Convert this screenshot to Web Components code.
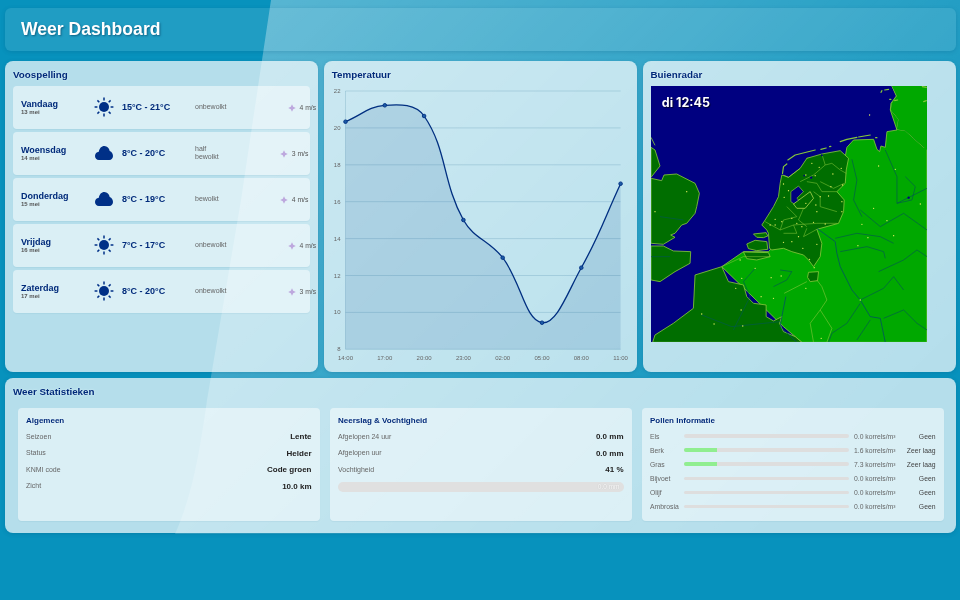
<!DOCTYPE html>
<html lang="nl"><head><meta charset="utf-8"><title>Weer Dashboard</title>
<style>
html,body{margin:0;padding:0;height:100%}
body{background:#0792bd;font-family:"Liberation Sans",Arial,sans-serif;overflow:hidden}
</style></head><body>
<weer-app>
  <weer-glare></weer-glare>
  <weer-header>Weer Dashboard</weer-header>
  <weer-top>
    <weer-card heading="Voospelling">
      <forecast-row day="Vandaag" date="13 mei" icon="sun" temp="15°C - 21°C" desc="onbewolkt" wind="4 m/s"></forecast-row>
      <forecast-row day="Woensdag" date="14 mei" icon="cloud" temp="8°C - 20°C" desc="half bewolkt" wind="3 m/s"></forecast-row>
      <forecast-row day="Donderdag" date="15 mei" icon="cloud" temp="8°C - 19°C" desc="bewolkt" wind="4 m/s"></forecast-row>
      <forecast-row day="Vrijdag" date="16 mei" icon="sun" temp="7°C - 17°C" desc="onbewolkt" wind="4 m/s"></forecast-row>
      <forecast-row day="Zaterdag" date="17 mei" icon="sun" temp="8°C - 20°C" desc="onbewolkt" wind="3 m/s"></forecast-row>
    </weer-card>
    <weer-card heading="Temperatuur"><temp-chart></temp-chart></weer-card>
    <weer-card heading="Buienradar"><radar-map></radar-map></weer-card>
  </weer-top>
  <weer-card heading="Weer Statistieken" wide>
    <stat-grid>
      <stat-box heading="Algemeen">
        <stat-row label="Seizoen" value="Lente"></stat-row>
        <stat-row label="Status" value="Helder"></stat-row>
        <stat-row label="KNMI code" value="Code groen"></stat-row>
        <stat-row label="Zicht" value="10.0 km"></stat-row>
      </stat-box>
      <stat-box heading="Neerslag &amp; Vochtigheid">
        <stat-row label="Afgelopen 24 uur" value="0.0 mm"></stat-row>
        <stat-row label="Afgelopen uur" value="0.0 mm"></stat-row>
        <stat-row label="Vochtigheid" value="41 %"></stat-row>
        <rain-bar>0.0 mm</rain-bar>
      </stat-box>
      <stat-box heading="Pollen Informatie">
        <pollen-row name="Els" amount="0.0 korrels/m³" level="Geen" pct="0"></pollen-row>
        <pollen-row name="Berk" amount="1.6 korrels/m³" level="Zeer laag" pct="20"></pollen-row>
        <pollen-row name="Gras" amount="7.3 korrels/m³" level="Zeer laag" pct="20"></pollen-row>
        <pollen-row name="Bijvoet" amount="0.0 korrels/m³" level="Geen" pct="0"></pollen-row>
        <pollen-row name="Olijf" amount="0.0 korrels/m³" level="Geen" pct="0"></pollen-row>
        <pollen-row name="Ambrosia" amount="0.0 korrels/m³" level="Geen" pct="0"></pollen-row>
      </stat-box>
    </stat-grid>
  </weer-card>
</weer-app>
<script>
function el(name, render){
  customElements.define(name, class extends HTMLElement{
    connectedCallback(){
      if(this.shadowRoot) return;
      const a=n=>this.getAttribute(n)||'';
      this.attachShadow({mode:'open'}).innerHTML=render(a,this);
    }
  });
}
el('weer-app',()=>`<style>:host{display:flex;flex-direction:column;position:relative;isolation:isolate;width:960px;height:600px;box-sizing:border-box;padding:8px 4px 0 5px;filter:blur(.3px)}</style><slot></slot>`);
el('weer-header',()=>`<style>:host{display:flex;align-items:center;height:43px;box-sizing:border-box;padding:0 16px 1px;margin-bottom:10px;flex:none;
  background:rgba(255,255,255,.1);border-radius:6px;box-shadow:0 1px 4px rgba(0,60,100,.18);color:#fff;font:bold 17.600px "Liberation Sans",sans-serif;text-shadow:1px 1px 2px rgba(0,40,70,.5)}</style><slot></slot>`);
el('weer-top',()=>`<style>:host{display:grid;grid-template-columns:repeat(3,1fr);column-gap:5.3px;height:311px;margin-bottom:6px;flex:none}</style><slot></slot>`);
el('weer-card',a=>`<style>:host{display:flex;flex-direction:column;box-sizing:border-box;padding:7px 8px 8px;border-radius:8px;min-width:0;
  background:rgba(255,255,255,.7);box-shadow:0 1px 4px rgba(0,60,100,.2)}
  :host([wide]){height:155px;flex:none}
  h2{margin:0 0 5px;font:bold 9.800px/13px "Liberation Sans",sans-serif;color:#002a7a;text-shadow:0 0 2px rgba(255,255,255,.7)}
  div{display:flex;flex-direction:column;gap:3px;flex:1;min-height:0}</style><h2>${a('heading')}</h2><div><slot></slot></div>`);
const SUN=`<svg width="20" height="20" viewBox="0 0 20 20" fill="#003087" stroke="#003087"><circle cx="10" cy="10" r="5" stroke="none"/><path stroke-width="1.500" d="M10 .6V3.400M10 16.600V19.400M.6 10H3.400M16.600 10H19.400M3.400 3.400L5.300 5.300M14.700 14.700L16.600 16.600M3.400 16.600L5.300 14.700M14.700 5.300L16.600 3.400"/></svg>`;
const CLOUD=`<svg width="20" height="20" viewBox="0 0 20 20" fill="#003087"><path d="M5 17C2.500 17 1 15.200 1 13C1 10.800 2.600 9 4.800 8.800C5.400 5.400 7.400 3 10.400 3C13.200 3 15.200 5.200 15.700 7.900C17.800 8.600 19 10.600 19 13C19 15.200 17.500 17 15.300 17Z"/></svg>`;
const STAR=`<svg width="8" height="8" viewBox="0 0 8 8" fill="#bda8de"><path d="M4 .2L5.200 2.800L7.800 4L5.200 5.200L4 7.800L2.800 5.200L.2 4L2.800 2.800Z"/></svg>`;
el('forecast-row',a=>`<style>:host{display:flex;align-items:center;height:43px;flex:none;box-sizing:border-box;padding-left:8px;border-radius:4px;background:rgba(255,255,255,.5);box-shadow:0 1px 1px rgba(0,80,120,.06);font-family:"Liberation Sans",sans-serif}
  .d{flex:0 0 73px;color:#002a7a}.d b{display:block;font:bold 9px/10.500px "Liberation Sans",sans-serif}.d small{display:block;font:bold 6px/7px "Liberation Sans",sans-serif;color:#555}
  .i{flex:0 0 20px;height:20px;margin:-1px 8px 0 0}.t{flex:0 0 73px;font:bold 9px/11px "Liberation Sans",sans-serif;color:#002a7a;white-space:nowrap;margin-top:-1px}
  .x{flex:none;width:min-content;font:7px/8px "Liberation Sans",sans-serif;color:#666;margin-top:-1px}
  .w{flex:none;display:flex;align-items:center;gap:3.500px;margin-left:61.500px;font:6.800px/8px "Liberation Sans",sans-serif;color:#555;white-space:nowrap}svg{display:block}</style>
  <div class="d"><b>${a('day')}</b><small>${a('date')}</small></div><div class="i">${a('icon')=='sun'?SUN:CLOUD}</div><div class="t">${a('temp')}</div><div class="x">${a('desc')}</div><div class="w">${STAR}<span>${a('wind')}</span></div>`);
el('temp-chart',()=>{
  const L=331.8,xs=[...Array(8)].map((_,i)=>345.3+i*39.3-L),yv=[121.7,105.3,116,220,257.7,322.7,267.7,183.7].map(v=>v-86);
  const top=5,st=36.9,p=xs.map((x,i)=>[x,yv[i]]);
  const c=p.map((q,i)=>{const pr=p[i-1]||q,nx=p[i+1]||q,d1=Math.hypot(q[0]-pr[0],q[1]-pr[1]),d2=Math.hypot(nx[0]-q[0],nx[1]-q[1]),s=d1+d2||1,fa=.4*d1/s,fb=.4*d2/s;
    return{a:[q[0]-fa*(nx[0]-pr[0]),q[1]-fa*(nx[1]-pr[1])],b:[q[0]+fb*(nx[0]-pr[0]),q[1]+fb*(nx[1]-pr[1])]}});
  let d=`M${p[0][0]} ${p[0][1]}`;for(let i=1;i<8;i++)d+=`C${c[i-1].b[0]} ${c[i-1].b[1]} ${c[i].a[0]} ${c[i].a[1]} ${p[i][0]} ${p[i][1]}`;
  const bot=top+7*st,x0=xs[0],x1=xs[7];
  let g='';[22,20,18,16,14,12,10,8].forEach((v,i)=>{const y=top+i*st;g+=`<line x1="${x0}" x2="${x1}" y1="${y}" y2="${y}" stroke="#0a5a80" stroke-opacity=".18" stroke-width=".9"/><text x="${x0-5}" y="${y+2}" text-anchor="end">${v}</text>`});
  ['14:00','17:00','20:00','23:00','02:00','05:00','08:00','11:00'].forEach((t,i)=>g+=`<text x="${xs[i]}" y="${bot+11}" text-anchor="middle">${t}</text>`);
  const pts=p.map(q=>`<circle cx="${q[0]}" cy="${q[1]}" r="1.800" fill="#1c5aa6" stroke="#002f80" stroke-width=".9"/>`).join('');
  return `<style>:host{display:block}svg{display:block;overflow:visible}text{font:6px "Liberation Sans",sans-serif;fill:#666}</style>
  <svg width="298" height="275" viewBox="0 0 298 275"><line x1="${x0}" x2="${x0}" y1="${top}" y2="${bot}" stroke="#0a5a80" stroke-opacity=".2" stroke-width=".8"/>${g}<path d="${d}L${x1} ${bot}L${x0} ${bot}Z" fill="#00448a" fill-opacity=".13"/><path d="${d}" fill="none" stroke="#002f80" stroke-width="1.300"/>${pts}</svg>`;
});
const Y='#86c83a',R='#00584e',RB='#004a6a';
const dots=[[515,310],[537,322],[578,342],[603,325],[525,347],[497,345],[430,372],[445,392],[432,412],[572,380],[607,375],[540,410],[565,408],[605,425],[527,435],[497,430],[405,478],[390,495],[405,495],[425,485],[455,475],[470,490],[530,455],[520,487],[555,492],[485,500],[605,455],[430,547],[455,545],[475,530],[530,553],[488,565],[508,598],[522,623],[497,685],[300,600],[345,625],[305,655],[287,685],[393,653],[423,648],[363,710],[400,715],[303,750],[185,762],[222,792],[308,798],[543,835],[660,720],[653,557],[683,533],[760,527],[740,482],[665,493],[700,445],[715,318],[765,328],[840,432],[140,395],[45,455],[688,165]];
el('radar-map',()=>`<style>:host{display:block;position:relative;width:276px;height:256px}svg{display:block}
  .t{position:absolute;left:11.300px;top:8.500px;color:#fff;font:bold 12.500px/16px Inter,"Liberation Sans",sans-serif;text-shadow:1px 1px 1px rgba(0,0,0,.7)}</style>
<svg width="276" height="256.300" viewBox="33 78 827 769" preserveAspectRatio="none">
<rect x="33" y="78" width="827" height="769" fill="#000080"/>
<g fill="#00a800" stroke="${Y}" stroke-width="2.500" stroke-linejoin="round">
<path d="M755 78L770 108L755 130L752 150L775 178L770 208L795 212L820 235L850 262L860 262V847H485L430 800L245 620L310 575L385 575L400 560L480 500L500 295L615 290L620 262L640 240L700 238L710 268L718 275L722 258L735 262L740 215L770 210L750 150L752 130L768 108Z"/>
<path d="M755 78H860V270L850 262L820 235L795 212L770 208L775 178L752 150L755 130L770 108Z" stroke="none"/>
</g>
<g fill="#006e00" stroke="${Y}" stroke-width="2.500" stroke-linejoin="round">
<path d="M245 620L165 645L160 745L100 790L45 825L38 847H485L465 830L430 815L418 790L425 770L400 783L378 770L378 735L340 730L320 710L310 675L265 665Z"/>
<path d="M425 345L445 352L480 325L500 295L545 282L600 272L625 295L618 330L615 370L590 395L612 420L610 455L595 490L530 508L545 550L540 590L520 620L505 600L490 585L455 575L430 565L395 570L388 565L385 520L380 510L365 495L375 480L400 440L415 410L420 370Z"/>
<path d="M340 522L378 518L383 528L370 533L350 532Z"/>
<path d="M320 552L345 541L380 545L383 568L350 572L325 566Z"/>
<path d="M310 576L385 578L390 590L350 600L320 596Z"/>
<path d="M505 637L535 635L532 662L510 665L502 652Z"/>
<path d="M33 262L45 270L60 318L33 352Z"/>
<path d="M33 355L65 362L72 345L110 342L165 370L178 400L170 440L165 460L140 490L125 495L105 520L92 525L105 532L70 553L33 550Z"/>
<path d="M33 558L70 558L100 573L152 575L150 610L105 635L60 665L33 660Z"/>
</g>
<path d="M452 395L475 378L490 395L470 415L480 425L462 432L452 425Z" fill="#000080" stroke="${Y}" stroke-width="2"/>
<path d="M460 432L510 395L520 415L495 445L470 445Z" fill="#006e00" stroke="#a4d24a" stroke-width="2.500"/>
<g fill="none" stroke="${Y}" stroke-width="1.800" opacity=".9">
<path d="M480 365L520 345L555 315L545 282M555 315L575 310L600 330L618 340M540 365L580 385L612 370M500 365L530 370L545 395L590 395M520 395L540 410L540 440L590 455M375 485L420 510L460 495L530 490L590 490M440 440L470 470L430 480L420 510M490 445L475 480L500 500M460 495L470 520L430 520M500 505L490 530L530 508M245 620L310 590L390 590"/>
<path d="M430 345L445 352L480 325" stroke="#a4d24a"/>
</g>
<g fill="none" stroke="#86c83a" stroke-width="3.500" stroke-linecap="round" stroke-linejoin="round">
<path d="M427 340L430 320L440 312"/><path d="M443 300L465 285L525 270"/><path d="M542 268L558 264"/><path d="M568 260L572 259"/><path d="M600 245L620 238L650 232"/><path d="M655 231L690 225"/><path d="M706 233L710 233"/><path d="M722 97L725 92"/><path d="M733 90L745 88"/><path d="M748 118L752 118"/><path d="M763 122L772 120"/><path d="M846 80L858 82"/><path d="M850 125L858 122"/>
</g>
<path d="M33 232L45 256" stroke="${Y}" stroke-width="2.500" fill="none"/>
<g fill="none" stroke="${R}" stroke-width="2">
<path d="M635 298L650 360L640 420L665 470"/><path d="M735 270L770 350L770 430L860 385"/><path d="M795 350L825 380L815 420L770 430"/><path d="M585 535L650 520L720 530L760 550"/><path d="M600 575L680 560L730 575L735 595"/><path d="M715 635L790 600L830 570L860 590"/><path d="M660 450L720 500L790 460L860 510"/><path d="M790 690L760 650L730 685L660 720"/><path d="M345 625L310 665L330 710L300 770"/><path d="M420 630L455 635L440 660L400 680"/><path d="M185 765L275 800L420 785"/><path d="M300 770L280 810"/><path d="M660 730L620 790L575 820L565 847"/><path d="M690 780L650 840"/><path d="M730 775L790 750L830 790L860 810"/><path d="M33 590L90 590M60 470L130 480"/>
</g>
<g fill="none" stroke="${RB}" stroke-width="2.200">
<path d="M530 505L585 545L590 580L600 620L635 690L660 720L690 770L720 775L735 847"/><path d="M437 710L425 770L420 800L470 847"/>
</g>
<g fill="none" stroke="${Y}" stroke-width="1.800"><path d="M530 660L545 680L560 720L540 750L575 805L560 847M540 750L510 790L520 847M432 700L500 665"/></g>
<g fill="#e8f060">${dots.map(d=>`<circle cx="${d[0]}" cy="${d[1]}" r="2"/>`).join('')}</g>
<g fill="#000080"><circle cx="805" cy="413" r="3.500"/><circle cx="513" cy="353" r="3.500"/><circle cx="545" cy="286" r="3"/><circle cx="492" cy="347" r="2.500"/></g>
</svg><div class="t">di 12:45</div>`);
el('stat-grid',()=>`<style>:host{display:grid;grid-template-columns:repeat(3,301.500px);column-gap:10.500px;padding:0 5px;margin-top:5px}</style><slot></slot>`);
el('stat-box',a=>`<style>:host{display:block;height:113px;box-sizing:border-box;padding:8px;border-radius:4px;background:rgba(255,255,255,.5);box-shadow:0 1px 1px rgba(0,80,120,.06)}
  h3{margin:0 0 5.500px;font:bold 8px/10px "Liberation Sans",sans-serif;color:#002a7a;text-shadow:0 0 2px rgba(255,255,255,.7)}</style><h3>${a('heading')}</h3><slot></slot>`);
el('stat-row',a=>`<style>:host{display:flex;justify-content:space-between;align-items:flex-start;height:16.600px;font-family:"Liberation Sans",sans-serif}
  span{font-size:7px;line-height:9px;color:#666}b{font-size:8px;line-height:10px;margin-top:.5px;color:#222}</style><span>${a('label')}</span><b>${a('value')}</b>`);
el('rain-bar',()=>`<style>:host{display:block;box-sizing:border-box;height:10px;margin-top:1px;padding-right:4px;border-radius:5px;background:#e0e0e0;text-align:right;color:#fff;font:6.500px/10px "Liberation Sans",sans-serif;text-shadow:0 0 1px rgba(0,0,0,.25)}</style><slot></slot>`);
el('pollen-row',a=>`<style>:host{display:grid;grid-template-columns:34px 165px 52px 1fr;align-items:center;height:14.100px;font:6.800px/9px "Liberation Sans",sans-serif;color:#666;margin-top:-2.500px;margin-bottom:2.500px}
  .b{height:3.500px;background:#dedede;border-radius:2px;overflow:hidden}.f{height:100%;background:#90ee90}.v{padding-left:5px;white-space:nowrap}.s{text-align:right;color:#444;white-space:nowrap}</style>
  <span>${a('name')}</span><div class="b"><div class="f" style="width:${a('pct')}%"></div></div><span class="v">${a('amount')}</span><span class="s">${a('level')}</span>`);
el('weer-glare',()=>`<style>:host{position:absolute;left:0;top:0;width:960px;height:600px;pointer-events:none;z-index:-1}
 div{width:100%;height:100%;background:linear-gradient(135deg,rgba(255,255,255,.36) 10%,rgba(255,255,255,.2) 45%,rgba(255,255,255,0) 85%);clip-path:path("M271 0L241 200L207 400C198 465 190 500 175 534L960 534L960 0Z")}</style><div></div>`);
</script>
</body></html>
